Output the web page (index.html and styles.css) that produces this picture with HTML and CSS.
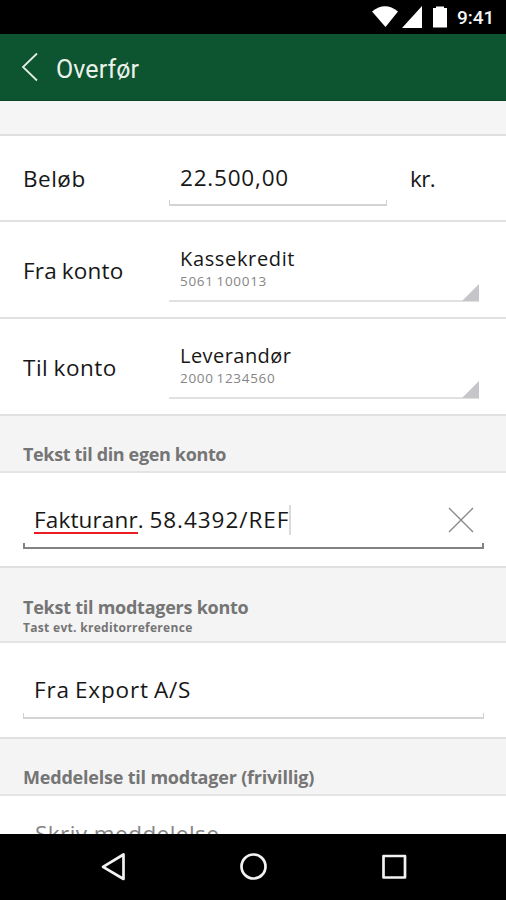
FILE: index.html
```html
<!DOCTYPE html>
<html lang="da">
<head>
<meta charset="utf-8">
<title>Overfør</title>
<link rel="stylesheet" href="styles.css">
</head>
<body>
<div class="phone">
  <header class="status">
    <svg class="status-icons" viewBox="0 0 80 34" aria-hidden="true">
      <path d="M1 11.500Q14 1 27 11.500L14.500 27Z"/>
      <path d="M51 6V28H31Z"/>
      <path d="M62 8H65V6.500H73V8H76V27.500H62Z"/>
    </svg>
    <span class="clock">9:41</span>
  </header>
  <div class="appbar">
    <svg class="back" viewBox="0 0 18 30" aria-hidden="true"><path d="M16 1.500L2 15L16 28.500"/></svg>
    <h1 class="title">Overfør</h1>
  </div>
  <main class="form">
    <div class="spacer"></div>
    <div class="row row-amount">
      <label class="label label-amount">Beløb</label>
      <div class="field amount"><span class="amount-text">22.500,00</span></div>
      <span class="unit">kr.</span>
    </div>
    <div class="row row-account">
      <label class="label label-from">Fra konto</label>
      <div class="select">
        <span class="name name-from">Kassekredit</span>
        <span class="number">5061 100013</span>
        <svg class="corner" viewBox="0 0 17 17" aria-hidden="true"><path d="M17 0V17H0Z"/></svg>
      </div>
    </div>
    <div class="row row-account row-last">
      <label class="label label-to">Til konto</label>
      <div class="select">
        <span class="name name-to">Leverandør</span>
        <span class="number">2000 1234560</span>
        <svg class="corner" viewBox="0 0 17 17" aria-hidden="true"><path d="M17 0V17H0Z"/></svg>
      </div>
    </div>
    <div class="section section-own"><h2 class="heading heading-own">Tekst til din egen konto</h2></div>
    <div class="entry entry-own">
      <div class="field wide focused">
        <span class="misspelled">Fakturanr</span><span class="own-text">. 58.4392/REF</span><span class="caret"></span>
        <svg class="clear" viewBox="0 0 26 26" aria-hidden="true"><path d="M1 1L25 25M25 1L1 25"/></svg>
      </div>
    </div>
    <div class="section section-recipient">
      <h2 class="heading heading-recipient">Tekst til modtagers konto</h2>
      <p class="hint">Tast evt. kreditorreference</p>
    </div>
    <div class="entry entry-recipient">
      <div class="field wide"><span class="recipient-text">Fra Export A/S</span></div>
    </div>
    <div class="section section-message"><h2 class="heading heading-message">Meddelelse til modtager (frivillig)</h2></div>
    <div class="message"><span class="placeholder">Skriv meddelelse</span></div>
  </main>
  <nav class="navbar">
    <svg viewBox="0 0 506 66" aria-hidden="true">
      <path d="M123.500 20.500V45L103 32.800Z"/>
      <circle cx="253.500" cy="32.500" r="12"/>
      <rect x="383.500" y="22" width="21.500" height="21.500"/>
    </svg>
  </nav>
</div>
</body>
</html>
```
FILE: styles.css
```css
* { box-sizing: border-box; }
body { margin: 0; font-family: "Open Sans", "Noto Sans", sans-serif; color: #171717; background: #fff; }
h1, h2, p { margin: 0; }
svg { display: block; }
.phone { width: 506px; height: 900px; display: flex; flex-direction: column; overflow: hidden; }
.status { flex: none; height: 34px; background: #000; display: flex; align-items: center; padding-left: 371px; font-family: Roboto, sans-serif; }
.status-icons { width: 80px; height: 34px; overflow: visible; fill: #fff; }
.clock { margin-left: 6px; padding-top: 1px; color: #f4f4f4; font-size: 19px; font-weight: 500; white-space: nowrap; }
.appbar { flex: none; height: 67px; background: #0d5431; border-bottom: 1px solid #0a4425; display: flex; align-items: center; padding-left: 21px; color: #e9f1e9; }
.back { width: 18px; height: 30px; fill: none; stroke: #e4ece4; stroke-width: 1.8; }
.title { margin-left: 17px; padding-top: 5px; font: 400 25px/30px Roboto, sans-serif; letter-spacing: 0.1px; }
.form { flex: none; height: 733px; overflow: hidden; }
.spacer { height: 35px; background: #f5f5f5; border-bottom: 2px solid #dfdfdf; }
.row { display: flex; align-items: center; padding-left: 23px; border-bottom: 2px solid #e1e1e1; }
.row-amount { height: 86px; }
.row-account { height: 97px; }
.row-last { height: 97px; }
.label { width: 146px; padding-top: 2px; font-size: 22.5px; line-height: 30px; white-space: nowrap; }
.label-amount { letter-spacing: 0.5px; }
.label-from { letter-spacing: 0.2px; word-spacing: -1.2px; }
.label-to { letter-spacing: 0.5px; word-spacing: -1px; }
.field { position: relative; border-bottom: 2px solid #d4d4d4; }
.field::before, .field::after { content: ""; position: absolute; bottom: 0; width: 1px; height: 4px; background: #d0d0d0; }
.field::before { left: 0; }
.field::after { right: 0; }
.amount { width: 218px; height: 43px; align-self: flex-end; margin-bottom: 14px; padding-left: 11px; font-size: 22.5px; line-height: 30px; letter-spacing: 0.8px; }
.unit { margin-left: 23px; padding-top: 2px; font-size: 22.5px; line-height: 30px; letter-spacing: -0.6px; }
.select { position: relative; width: 310px; height: 55px; margin-top: 9px; padding-left: 11px; border-bottom: 2px solid #e1e1e1; display: flex; flex-direction: column; }
.name { font-size: 20px; line-height: 24px; }
.name-from { letter-spacing: 0.65px; }
.name-to { letter-spacing: 0.45px; }
.number { margin-top: 1px; font-size: 13.5px; line-height: 18px; letter-spacing: 0.7px; word-spacing: -1.4px; color: #858585; }
.corner { position: absolute; right: 0; bottom: -1px; width: 17px; height: 17px; fill: #c6c6ca; }
.section { background: #f4f4f4; border-bottom: 2px solid #e4e4e4; padding-left: 23px; color: #757575; }
.section-own { height: 57px; padding-top: 26px; }
.section-recipient { height: 75px; padding-top: 27px; }
.section-message { height: 57px; padding-top: 26px; }
.heading { font-size: 18px; line-height: 25px; font-weight: 700; white-space: nowrap; }
.heading-own { letter-spacing: -0.35px; }
.heading-recipient { letter-spacing: -0.25px; }
.heading-message { letter-spacing: -0.2px; }
.hint { font-size: 12px; line-height: 15px; font-weight: 700; letter-spacing: 0.3px; white-space: nowrap; }
.entry { padding-left: 23px; border-bottom: 2px solid #e0e0e0; }
.entry-own { height: 95px; padding-top: 28px; }
.entry-recipient { height: 96px; padding-top: 32px; }
.wide { width: 461px; height: 44px; padding-left: 11px; font-size: 22.5px; line-height: 30px; white-space: nowrap; }
.focused { height: 48px; line-height: 38px; border-bottom-color: #828282; display: flex; }
.focused::before, .focused::after { width: 2px; background: #828282; }
.misspelled { height: 33px; border-bottom: 2px solid #ec1c24; letter-spacing: 0.15px; }
.own-text { letter-spacing: 0.95px; word-spacing: -2px; }
.recipient-text { letter-spacing: 0.85px; word-spacing: -1.6px; }
.caret { width: 2px; height: 30px; margin-top: 4px; background: #dadada; }
.clear { width: 26px; height: 26px; margin: 6px 10px 0 auto; fill: none; stroke: #858585; stroke-width: 1.3; }
.message { height: 60px; padding: 23px 0 0 35px; }
.placeholder { display: block; font-size: 22.5px; line-height: 30px; letter-spacing: 0.45px; color: #858585; }
.navbar { flex: none; height: 66px; background: #000; }
.navbar svg { width: 506px; height: 66px; fill: none; stroke: #f2f2f2; stroke-width: 2.7; stroke-linejoin: round; }
```
